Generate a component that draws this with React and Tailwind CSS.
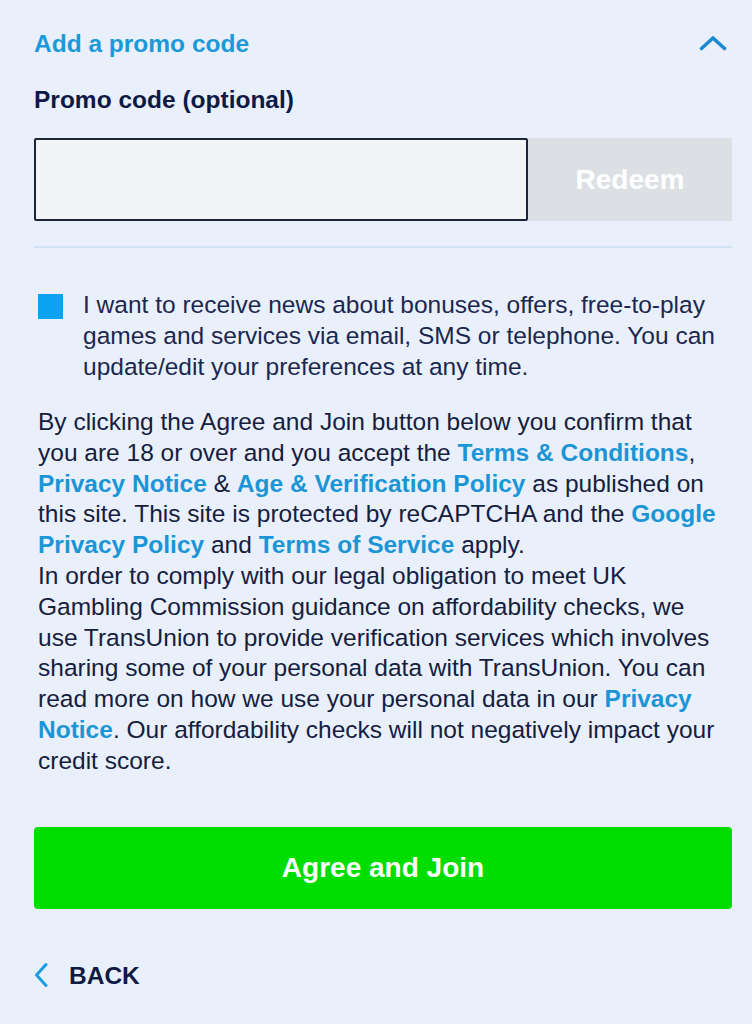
function Link({ children }) {
  return <a href="#" className="font-bold text-[#1b95d6]">{children}</a>
}

export default function App() {
  return (
    <div className="min-h-[1024px] w-[752px] bg-[#eaf0fb] pl-[34px] pr-[20px] pt-[27px] font-['Liberation_Sans',Arial,sans-serif] text-[24.5px] leading-[31px] text-[#14203e]">
      <div className="flex h-[32px] items-center justify-between">
        <span className="font-bold text-[#1a9ad8]">Add a promo code</span>
        <svg width="28" height="16" viewBox="0 0 28 16" className="mr-[5px]" fill="none">
          <polyline points="2.5,13.5 14,3 25.5,13.5" stroke="#1b8ad0" strokeWidth="3.6" strokeLinecap="round" strokeLinejoin="round" />
        </svg>
      </div>

      <div className="mt-[25px] font-bold text-[#0d1a44]">Promo code (optional)</div>

      <div className="mt-[23px] flex h-[83px]">
        <input
          type="text"
          aria-label="Promo code"
          className="h-full w-[494px] rounded-[2px] border-2 border-[#1c2438] bg-[#f3f4f6] px-3 outline-none"
        />
        <button className="h-full flex-1 bg-[#dcdfe4] text-[28px] font-bold text-white">Redeem</button>
      </div>

      <div className="mt-[25px] h-[2px] bg-[#cfe3f5]" />

      <div className="mt-[41px] flex gap-[20px] pl-[4px] pr-[8px]">
        <div className="mt-[5px] h-[25px] w-[25px] shrink-0 bg-[#0ca3f2]" />
        <p className="text-[#1a2850]">
          I want to receive news about bonuses, offers, free-to-play games and services via email, SMS or telephone. You can update/edit your preferences at any time.
        </p>
      </div>

      <p className="mt-[25px] pl-[4px] pr-[10px] leading-[30.8px]">
        By clicking the Agree and Join button below you confirm that you are 18 or over and you accept the <Link>Terms &amp; Conditions</Link>,{' '}
        <Link>Privacy Notice</Link> &amp; <Link>Age &amp; Verification Policy</Link> as published on this site. This site is protected by reCAPTCHA and the{' '}
        <Link>Google Privacy Policy</Link> and <Link>Terms of Service</Link> apply.
        <br />
        In order to comply with our legal obligation to meet UK Gambling Commission guidance on affordability checks, we use TransUnion to provide verification services which involves sharing some of your personal data with TransUnion. You can read more on how we use your personal data in our <Link>Privacy Notice</Link>. Our affordability checks will not negatively impact your credit score.
      </p>

      <button className="mt-[50px] flex h-[82px] w-full items-center justify-center rounded-[4px] bg-[#00dd00] text-[28px] font-bold text-white">
        Agree and Join
      </button>

      <div className="mt-[51px] flex h-[31px] items-center gap-[21px]">
        <svg width="14" height="26" viewBox="0 0 14 26" fill="none">
          <polyline points="12,2.5 2.5,13 12,23.5" stroke="#1b9be0" strokeWidth="3" strokeLinecap="round" strokeLinejoin="round" />
        </svg>
        <span className="font-bold text-[#0d1a44]">BACK</span>
      </div>
    </div>
  )
}
